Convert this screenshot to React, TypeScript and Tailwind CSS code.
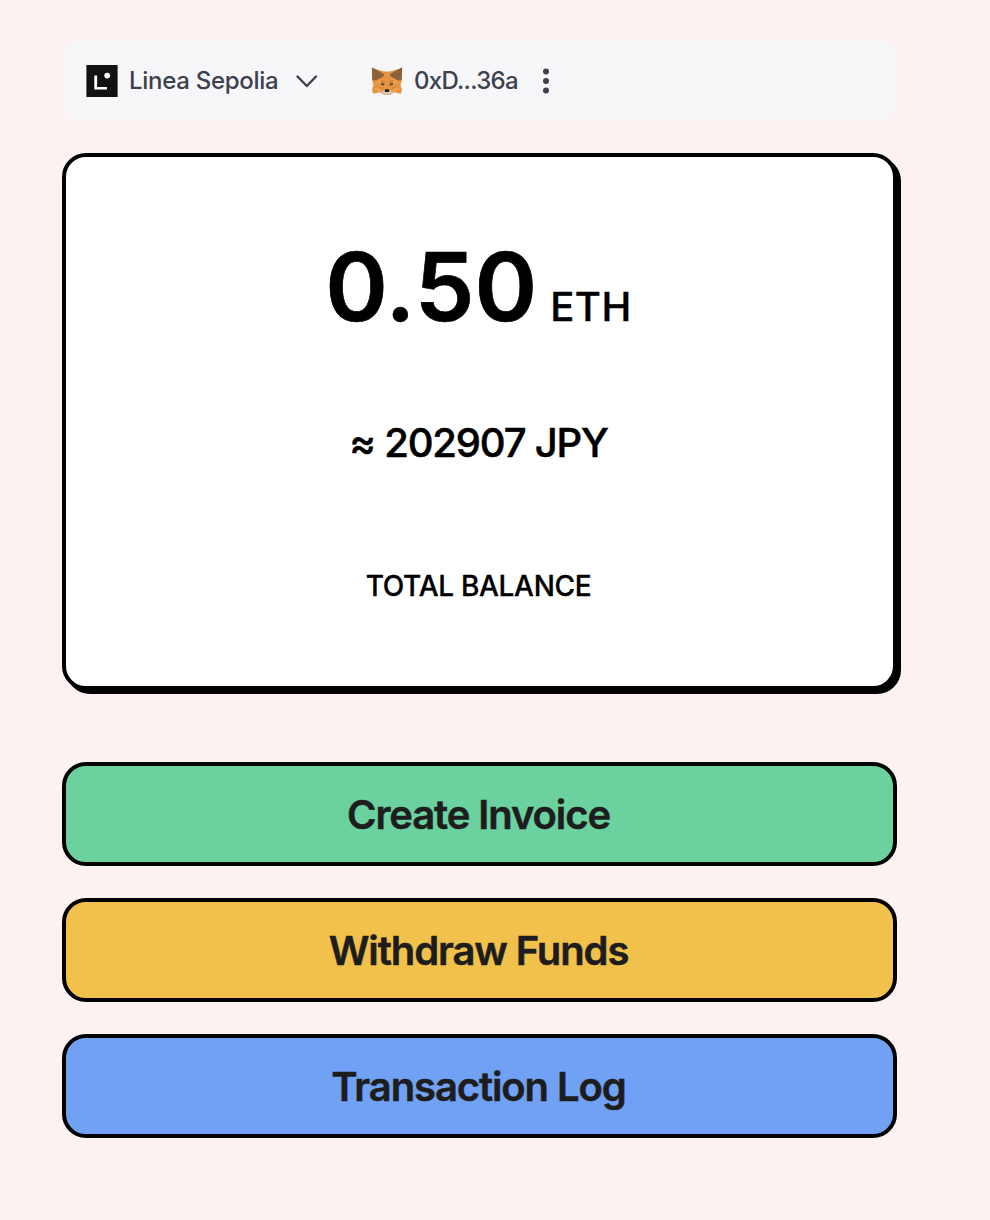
function LineaLogo() {
  return (
    <svg className="h-8 w-8 shrink-0" viewBox="0 0 32 32">
      <rect x="0.4" y="0" width="31.2" height="32" fill="#121212" />
      <path d="M8.3 10.500h2.800v11.500h9.900v2.600H8.300z" fill="#fff" />
      <circle cx="21.200" cy="10.600" r="2.900" fill="#fff" />
    </svg>
  );
}

function FoxLogo() {
  return (
    <svg className="h-8 w-8 shrink-0" viewBox="0 0 32 32">
      <path d="M1 3l12 3.500h6L31 3v12l-1.500 5L31 25l-1.200 3.800-7-1.600-3.800 2.800h-6l-3.800-2.800-7 1.600L1 25l1.500-5L1 15z" fill="#e49440" />
      <path d="M.8 2.200L13 9l-.8 2.500L5 15.500l-3.600-.5z" fill="#8b6239" />
      <path d="M31.200 2.200L19 9l.8 2.500 7.200 4 3.600-.5z" fill="#8b6239" />
      <path d="M11.400 13L3 17.500l6 1 4-1zM20.600 13l8.400 4.500-6 1-4-1z" fill="#eb9f50" />
      <path d="M10 14.500l3.500 1.500.5 3.500-4-1.700zM22 14.500L18.500 16l-.5 3.500 4-1.700z" fill="#d77d34" />
      <path d="M10 18l3 .5.300 1.900-3-.4zM22 18l-3 .5-.3 1.900 3-.4z" fill="#53473b" />
      <path d="M2.500 23.500l8-.5-1 4.500zM29.500 23.500l-8-.5 1 4.500z" fill="#f0a04f" />
      <path d="M7 22l4 .5-.5 1.800zM25 22l-4 .5.500 1.800z" fill="#d6783a" />
      <path d="M10 27l4-2h4l4 2-3 2.800h-6z" fill="#d5c5b2" />
      <path d="M14 24.300h4l.3 2.700h-4.600z" fill="#242323" />
    </svg>
  );
}

const actions = [
  { label: "Create Invoice", color: "bg-[#6bd29f]" },
  { label: "Withdraw Funds", color: "bg-[#f2c14b]" },
  { label: "Transaction Log", color: "bg-[#70a1f5]" },
];

export default function App() {
  return (
    <main className="min-h-[1220px] bg-[#fcf2f1] pl-[62px] pr-[93px] pt-[41px] font-['Inter',sans-serif] text-black">
      <header className="flex h-[79px] items-center rounded-2xl bg-[#f7f7f9] pl-6 text-2xl font-medium text-[#3d404d]">
        <button className="flex items-center">
          <LineaLogo />
          <span className="ml-[11px] w-[150px] whitespace-nowrap pt-px text-left tracking-[-0.28px]">Linea Sepolia</span>
          <svg className="ml-[15px] h-6 w-6" viewBox="0 0 24 24" fill="none" stroke="currentColor" strokeWidth="2.4" strokeLinecap="round" strokeLinejoin="round">
            <path d="M3.500 7.500l9.300 9.500L22 7.500" />
          </svg>
        </button>
        <button className="ml-[53px] flex items-center">
          <FoxLogo />
          <span className="ml-[11px] w-[104px] whitespace-nowrap pt-px text-left tracking-[-0.7px]">0xD...36a</span>
          <svg className="ml-4 h-8 w-6" viewBox="0 0 24 32" fill="currentColor">
            <circle cx="12" cy="6.500" r="3" />
            <circle cx="12" cy="16" r="3" />
            <circle cx="12" cy="25.500" r="3" />
          </svg>
        </button>
      </header>

      <section className="mt-[33px] flex h-[537px] flex-col items-center rounded-3xl border-4 border-black bg-white pr-[2px] pt-[82px] shadow-[4px_4px_0_#000]">
        <div className="flex h-[96px] items-baseline leading-[96px]">
          <span className="text-[95px] font-semibold [-webkit-text-stroke:0.7px_currentColor]">0.50</span>
          <span className="ml-[13px] text-[40px] font-medium tracking-[0.5px] [-webkit-text-stroke:0.4px_currentColor]">ETH</span>
        </div>
        <p className="mt-[80px] text-[40px] font-medium leading-[56px] tracking-[-1.2px] [-webkit-text-stroke:0.5px_currentColor]">≈ 202907 JPY</p>
        <p className="mt-[95px] text-[28px] font-medium leading-[40px] tracking-[-0.3px] [-webkit-text-stroke:0.3px_currentColor]">TOTAL BALANCE</p>
      </section>

      <nav className="mt-[72px] flex flex-col gap-8">
        {actions.map((action) => (
          <button
            key={action.label}
            className={`flex h-[104px] items-center justify-center rounded-3xl border-4 border-black pr-0.5 pt-0.5 text-[40px] font-semibold tracking-[-1.1px] text-[#1d1d1d] [-webkit-text-stroke:0.5px_currentColor] ${action.color}`}
          >
            {action.label}
          </button>
        ))}
      </nav>
    </main>
  );
}
